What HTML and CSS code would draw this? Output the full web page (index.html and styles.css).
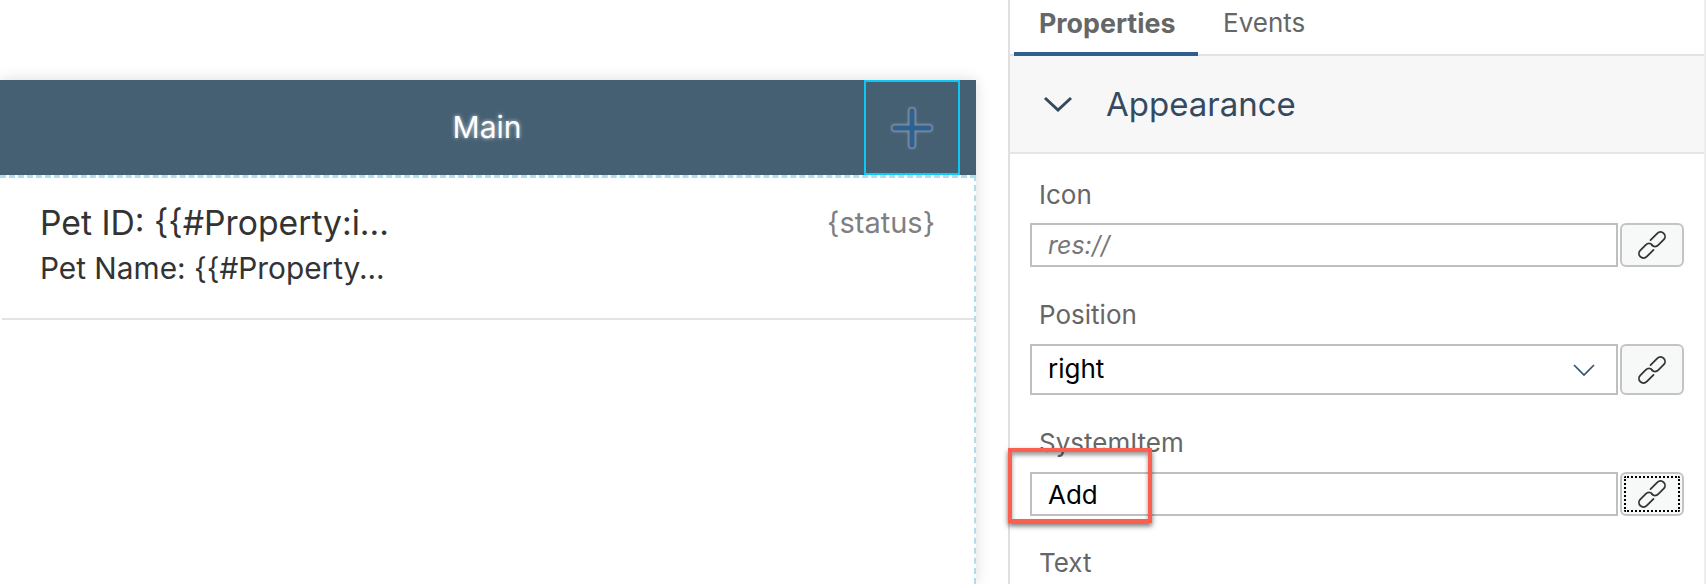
FILE: index.html
```html
<!DOCTYPE html>
<html lang="en">
<head>
<meta charset="utf-8">
<title>Page editor</title>
<link rel="stylesheet" href="styles.css">
</head>
<body>
<svg class="defs" width="0" height="0" aria-hidden="true">
  <symbol id="link" viewBox="0 0 32 32">
    <path d="M14.5 11.1 21.3 4.3A4.5 4.5 0 0 1 27.7 10.7L22.2 16.2A4.5 4.5 0 0 1 15.8 16.2M17.5 20.9 10.7 27.7A4.5 4.5 0 0 1 4.3 21.3L9.8 15.8A4.5 4.5 0 0 1 16.2 15.8" fill="none" stroke="#333" stroke-width="1.8" stroke-linecap="round"/>
  </symbol>
</svg>
<main class="page">
  <section class="canvas">
    <div class="phone">
      <header class="nav">
        <span class="nav-title">Main</span>
        <span class="nav-add">
          <svg width="44" height="44" viewBox="0 0 44 44"><path d="M22 5V39M5 22H39" class="plus-glow"/><path d="M22 5V39M5 22H39" class="plus"/></svg>
        </span>
      </header>
      <div class="list">
        <div class="row">
          <div class="row-text">
            <div class="row-title">Pet ID: {{#Property:i...</div>
            <div class="row-sub">Pet Name: {{#Property...</div>
          </div>
          <div class="row-status">{status}</div>
        </div>
      </div>
    </div>
  </section>
  <aside class="panel">
    <nav class="tabs">
      <span class="tab tab-active">Properties</span>
      <span class="tab tab-plain">Events</span>
    </nav>
    <div class="section-head">
      <svg width="32" height="16" viewBox="0 0 32 16"><path d="M3 2 16 14 29 2" fill="none" stroke="#354a5f" stroke-width="3"/></svg>
      <span>Appearance</span>
    </div>
    <div class="form">
      <div class="field field-icon">
        <label>Icon</label>
        <div class="control">
          <div class="input placeholder">res://</div>
          <button class="bind"><svg width="32" height="32"><use href="#link"/></svg></button>
        </div>
      </div>
      <div class="field field-position">
        <label>Position</label>
        <div class="control control-tall">
          <div class="input select"><span class="select-value">right</span>
            <svg width="22" height="12" viewBox="0 0 22 12"><path d="M1 1 11 11 21 1" fill="none" stroke="#2f5478" stroke-width="1.7"/></svg>
          </div>
          <button class="bind"><svg width="32" height="32"><use href="#link"/></svg></button>
        </div>
      </div>
      <div class="field field-system">
        <label>SystemItem</label>
        <div class="control">
          <div class="input">Add</div>
          <button class="bind bind-focus"><svg width="32" height="32"><use href="#link"/></svg></button>
        </div>
        <div class="callout"></div>
      </div>
      <div class="field field-text">
        <label>Text</label>
      </div>
    </div>
  </aside>
</main>
</body>
</html>
```
FILE: styles.css
```css
* { box-sizing: border-box; }
html, body { margin: 0; height: 584px; overflow: hidden; background: #fff; }
body { font-family: Inter, "Noto Sans", sans-serif; }
.defs { position: absolute; }
.page { display: flex; height: 584px; }

.canvas { width: 1008px; padding-top: 80px; flex: none; }
.phone { width: 976px; height: 504px; box-shadow: 0 0 14px rgba(0,0,0,.14); background: #fff; }
.nav { height: 95px; background: #456073; display: flex; justify-content: flex-end; align-items: stretch; padding-right: 16px; position: relative; }
.nav-title { position: absolute; left: 0; right: 2px; top: 31px; text-align: center; color: #fff; font-size: 30px; line-height: 32px; text-shadow: 0 0 4px rgba(255,255,255,.7); }
.nav-add { width: 96px; border: 2px solid #0fc6f5; display: flex; align-items: center; justify-content: center; }
.plus-glow { stroke: #b4c6d4; stroke-width: 8; stroke-linecap: round; fill: none; opacity: .55; filter: blur(1px); }
.plus { stroke: #2f6090; stroke-width: 5; stroke-linecap: round; fill: none; }
.list { height: 409px; border-top: 3px dashed #b1dcea; border-right: 2px dashed #b1dcea; padding-left: 2px; }
.row { height: 142px; border-bottom: 2px solid #e4e4e4; display: flex; justify-content: space-between; padding: 24px 39px 0 38px; }
.row-title { font-size: 33.7px; line-height: 42px; color: #333; }
.row-sub { font-size: 29.8px; line-height: 49px; color: #333; }
.row-status { font-size: 29px; line-height: 42px; color: #7f7f7f; }

.panel { flex: 1; border-left: 2px solid #e0e0e4; border-right: 2px solid #eee; min-width: 0; }
.tabs { height: 56px; display: flex; border-bottom: 2px solid #e2e2e2; padding-left: 4px; }
.tab { height: 56px; padding: 4px 25px 0; font-size: 26px; line-height: 38px; color: #666; }
.tab-active { width: 184px; font-size: 26.8px; font-weight: 700; border-bottom: 4px solid #2f5f8c; }
.section-head { height: 98px; background: #f7f7f7; border-bottom: 2px solid #e5e5e5; display: flex; align-items: center; gap: 32px; padding-left: 32px; font-size: 33px; color: #354a5f; }
.form { padding: 0 20px 0 20px; }
.field { position: relative; }
.field label { display: block; padding-left: 9px; color: #666; font-size: 26px; line-height: 32px; }
.control { display: flex; gap: 2px; height: 44px; }
.control-tall { height: 51px; }
.field-icon { padding-top: 25px; }
.field-icon .control { margin-top: 12px; }
.field-position { padding-top: 32px; }
.field-position .control { margin-top: 13px; }
.field-system { padding-top: 32px; }
.field-system .control { margin-top: 13px; }
.field-text { padding-top: 31px; }
.input { flex: 1; min-width: 0; border: 2px solid #bfbfbf; display: flex; align-items: center; justify-content: space-between; padding: 0 21px 0 16px; font-size: 26px; color: #000; }
.select-value { margin-top: -2px; }
.placeholder { font-style: italic; font-size: 25px; color: #777; }
.bind { width: 64px; flex: none; padding: 0; border: 2px solid #c4c4c4; border-radius: 6px; background: #f7f8f8; display: flex; align-items: center; justify-content: center; }
.bind-focus { outline: 2px dotted #000; outline-offset: -6px; }
.callout { position: absolute; left: -22px; top: 53px; width: 144px; height: 75px; border: 4px solid #fa5f50; box-shadow: 0 3px 5px rgba(0,0,0,.55), inset 0 3px 4px rgba(0,0,0,.4); pointer-events: none; }
```
